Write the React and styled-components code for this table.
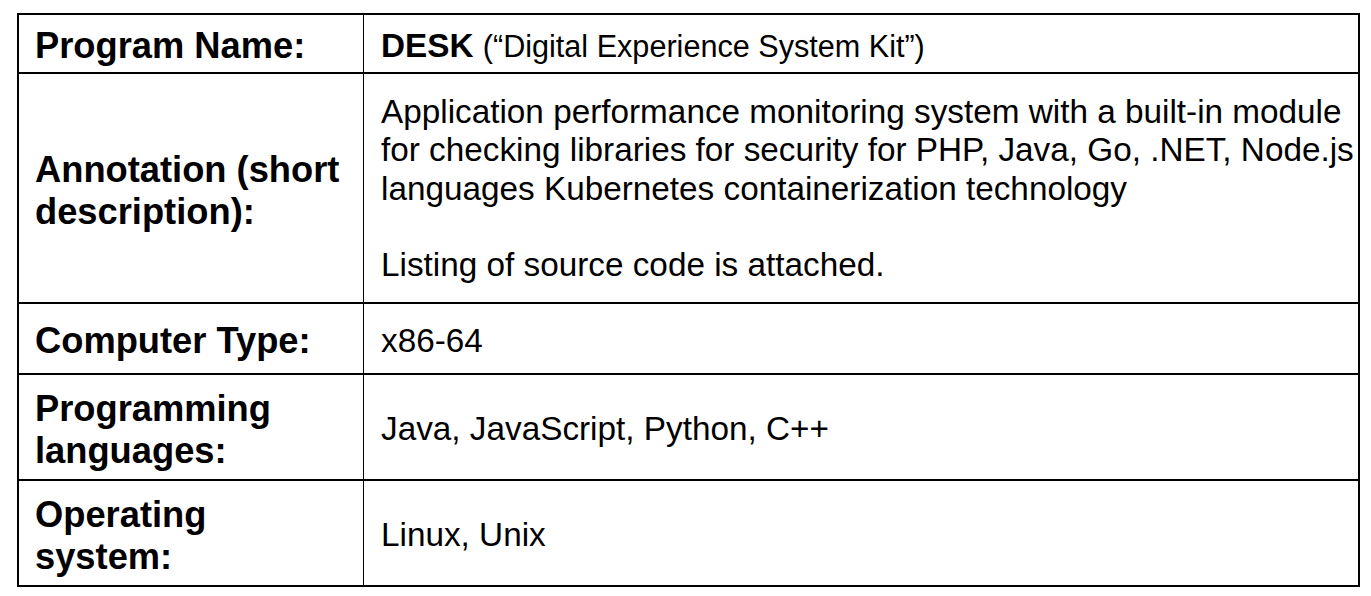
import React from "react";
import styled, { createGlobalStyle } from "styled-components";

const GlobalStyle = createGlobalStyle`
  html, body {
    margin: 0;
    padding: 0;
    background: #ffffff;
  }
  body {
    font-family: "Liberation Sans", Arial, sans-serif;
    color: #000000;
  }
`;

const Page = styled.div`
  padding: 13px 0 0 17px;
`;

const Table = styled.div`
  width: 1339px;
  border: 2px solid #000;
  display: flex;
  flex-direction: column;
`;

const Row = styled.div`
  display: grid;
  grid-template-columns: 345px 1fr;
  height: ${(p) => p.$h}px;
  border-top: ${(p) => (p.$first ? "none" : "2px solid #000")};
`;

const LabelCell = styled.div`
  border-right: 1px solid #000;
  padding: 5px 0 0 16px;
  display: flex;
  align-items: center;
`;

const Label = styled.div`
  font-size: 36.3px;
  font-weight: 700;
  line-height: 1.15;
`;

const ValueCell = styled.div`
  padding: ${(p) => p.$top}px 0 0 17px;
  display: flex;
  flex-direction: column;
  justify-content: center;
`;

const Para = styled.p`
  margin: ${(p) => (p.$gap ? "38px" : "0")} 0 0 0;
  font-size: 33.3px;
  line-height: 1.15;

  strong {
    font-weight: 700;
  }
`;

const Note = styled.span`
  font-size: 30.6px;
`;

// rows of the program card, heights taken from the document
const rows = [
  {
    label: ["Program Name:"],
    height: 57,
    top: 5,
    value: (
      <Para>
        <strong>DESK</strong> <Note>(“Digital Experience System Kit”)</Note>
      </Para>
    ),
  },
  {
    label: ["Annotation (short", "description):"],
    height: 228,
    top: 1,
    value: (
      <>
        <Para>
          Application performance monitoring system with a built-in module for
          checking libraries for security for PHP, Java, Go, .NET, Node.js
          languages Kubernetes containerization technology
        </Para>
        <Para $gap>Listing of source code is attached.</Para>
      </>
    ),
  },
  {
    label: ["Computer Type:"],
    height: 69,
    top: 5,
    value: <Para>x86-64</Para>,
  },
  {
    label: ["Programming", "languages:"],
    height: 104,
    top: 5,
    value: <Para>Java, JavaScript, Python, C++</Para>,
  },
  {
    label: ["Operating", "system:"],
    height: 104,
    top: 5,
    value: <Para>Linux, Unix</Para>,
  },
];

const App = () => {
  return (
    <>
      <GlobalStyle />
      <Page>
        <Table>
          {rows.map((row, i) => (
            <Row key={i} $h={row.height} $first={i === 0}>
              <LabelCell>
                <Label>
                  {row.label.map((line, j) => (
                    <React.Fragment key={j}>
                      {j > 0 && <br />}
                      {line}
                    </React.Fragment>
                  ))}
                </Label>
              </LabelCell>
              <ValueCell $top={row.top}>{row.value}</ValueCell>
            </Row>
          ))}
        </Table>
      </Page>
    </>
  );
};

export default App;
